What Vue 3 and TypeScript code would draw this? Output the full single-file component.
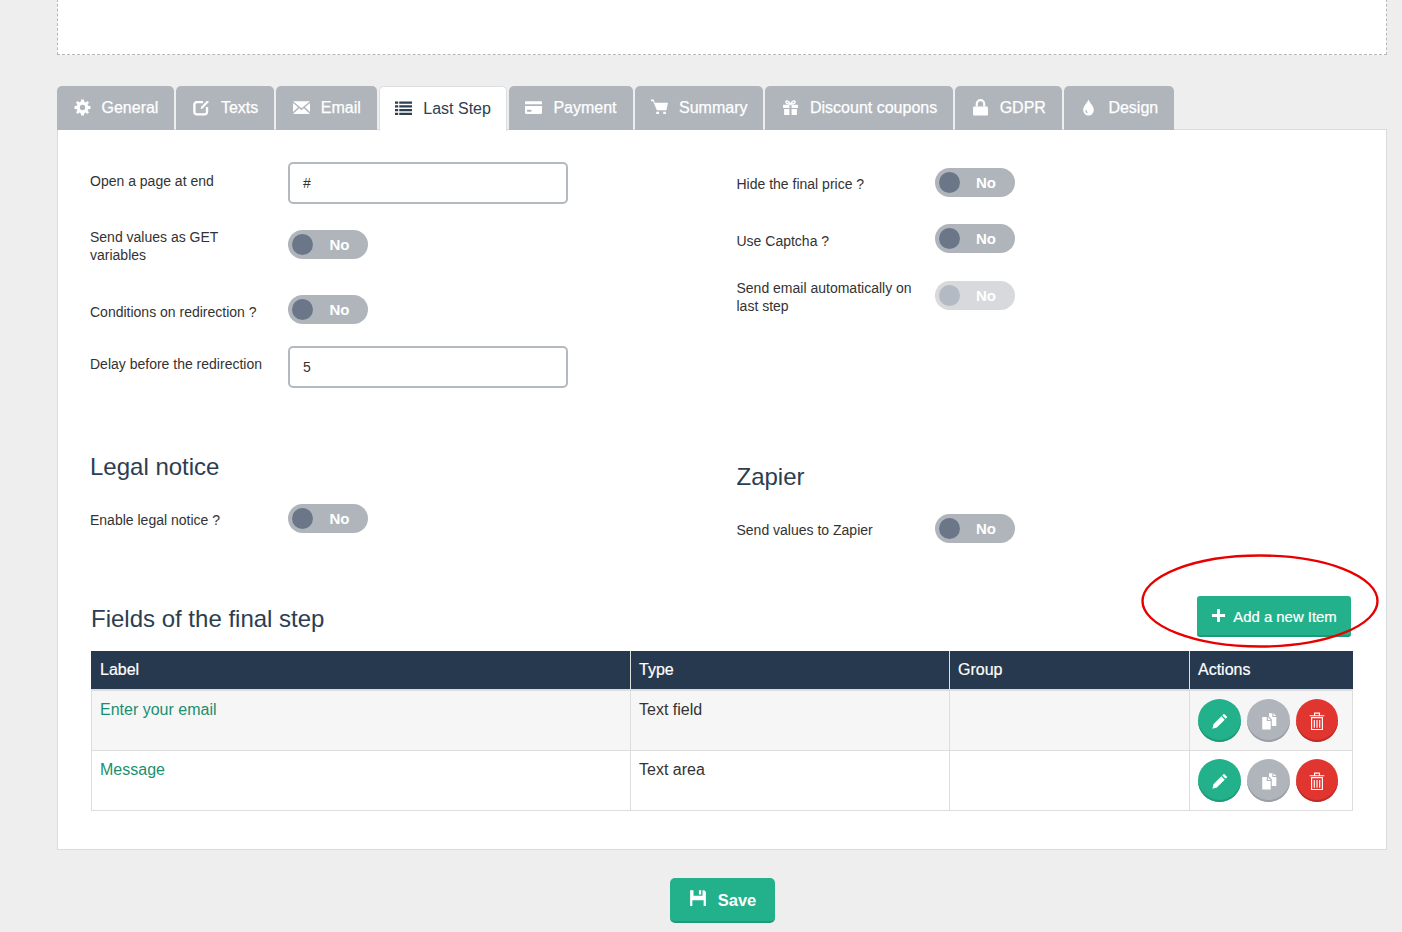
<script setup lang="ts">
interface Icon { fill?: string; stroke?: string; sw?: number }

const icons: Record<string, Icon> = {
  gear: { fill: 'M6.7.5H9.3L9.7 2.7 11 3.2 12.4 1.8 14.2 3.6 12.8 5 13.3 6.3 15.5 6.7V9.3L13.3 9.7 12.8 11 14.2 12.4 12.4 14.2 11 12.8 9.7 13.3 9.3 15.500H6.7L6.3 13.3 5 12.8 3.6 14.2 1.8 12.4 3.2 11 2.7 9.7.5 9.3V6.7L2.7 6.3 3.2 5 1.8 3.6 3.6 1.8 5 3.2 6.3 2.700ZM8 5.500a2.500 2.500 0 1 0 0 5 2.500 2.500 0 0 0 0-5Z' },
  edit: { fill: 'M7.200 9.300 7.600 7.500 12.800 1.800 14.500 1.800 14.500 3.200 9 9Z', stroke: 'M9.500 3H3.500a2.200 2.200 0 0 0-2.200 2.200V12.300a2.200 2.200 0 0 0 2.200 2.200h7.500a2.200 2.200 0 0 0 2.200-2.200V7.500', sw: 2.200 },
  mail: { fill: 'M0 2h16L8 8.800ZM0 3.800l4.800 4L0 12.300ZM16 3.800l-4.800 4 4.800 4.500ZM0 14l5.800-5.300L8 10.500l2.200-1.800L16 14Z' },
  list: { fill: 'M0 1.500h3v2H0ZM4 1.500h12v2H4ZM0 5h3v2H0ZM4 5h12v2H4ZM0 8.500h3v2H0ZM4 8.500h12v2H4ZM0 12h3v2H0ZM4 12h12v2H4Z' },
  card: { fill: 'M1 2h14a1 1 0 0 1 1 1v2H0V3a1 1 0 0 1 1-1ZM0 6.500h16V13a1 1 0 0 1-1 1H1a1 1 0 0 1-1-1ZM2 10v2h4v-2Z' },
  cart: { fill: 'M0 .5h2.500l1 3H16l-1.500 7H5.500L2 2H0ZM5 12h2.500v2H5ZM11.500 12H14v2h-2.500Z' },
  gift: { fill: 'M1 5.500h6v3H1ZM9 5.500h6v3H9ZM2 9.500h5V15H2ZM9 9.500h5V15H9Z', stroke: 'M8 4.800C6 1 3 1 3.800 3.300 4.300 4.800 8 4.800 8 4.800s3.700 0 4.200-1.500C13 1 10 1 8 4.800Z', sw: 1.300 },
  lock: { fill: 'M2 7h12a1 1 0 0 1 1 1v6.500a1 1 0 0 1-1 1H2a1 1 0 0 1-1-1V8a1 1 0 0 1 1-1Z', stroke: 'M4.500 7V4.500a3.500 3.500 0 0 1 7 0V7', sw: 2 },
  drop: { fill: 'M8 .5c1 3 5 6 5 10a5 5 0 0 1-10 0c0-4 4-7 5-10ZM5 10.500c0 1.800 1.200 3.100 3 3.200-1.100-.8-1.600-1.800-1.600-3.200Z' },
  plus: { fill: 'M6.500 1h3v5.500H15v3H9.500V15h-3V9.500H1v-3h5.500Z' },
  pencil: { fill: 'M11.500 1.500l3 3L13 6l-3-3ZM9.200 3.800l3 3-7 7-4 1 1-4Z' },
  copy: { fill: 'M2 4.500h4v3.500h3.500V15.500H2ZM7 4.500l2.500 2.500H7ZM8 1h3v3.500h3.500V12.500h-4V6.500L8 4ZM12 1l2.500 2.500H12Z' },
  trash: { stroke: 'M1.500 3.300h13M5.800 3V1h4.400V3M3.200 5h9.600V15.500H3.200ZM5.600 7V14M8 7V14M10.400 7V14', sw: 1 },
  save: { fill: 'M1 1h3v5h8V1h1.500L15 2.500V15h-2v-5H3v5H1ZM8.800 1h2v3.800h-2Z' },
}

const tabs = [
  { label: 'General', icon: 'gear' },
  { label: 'Texts', icon: 'edit' },
  { label: 'Email', icon: 'mail' },
  { label: 'Last Step', icon: 'list', active: true },
  { label: 'Payment', icon: 'card' },
  { label: 'Summary', icon: 'cart' },
  { label: 'Discount coupons', icon: 'gift' },
  { label: 'GDPR', icon: 'lock' },
  { label: 'Design', icon: 'drop' },
]

const rows = [
  { label: 'Enter your email', type: 'Text field' },
  { label: 'Message', type: 'Text area' },
]

const actions = [
  { icon: 'pencil', cls: 'green' },
  { icon: 'copy', cls: 'grey' },
  { icon: 'trash', cls: 'red' },
]
</script>

<template>
  <div class="page">
    <div class="dropzone"></div>

    <nav class="tabs">
      <a v-for="t in tabs" :key="t.label" class="tab" :class="{ active: t.active }">
        <svg class="ico" viewBox="0 0 16 16">
          <path v-if="icons[t.icon].fill" :d="icons[t.icon].fill" fill="currentColor" fill-rule="evenodd" />
          <path v-if="icons[t.icon].stroke" :d="icons[t.icon].stroke" fill="none" stroke="currentColor" :stroke-width="icons[t.icon].sw" />
        </svg>
        <span>{{ t.label }}</span>
      </a>
    </nav>

    <section class="panel">
      <div class="cols">
        <div class="col">
          <div class="row h66">
            <label class="lbl mt10">Open a page at end</label>
            <input class="field" value="#" />
          </div>
          <div class="row h67">
            <label class="lbl">Send values as GET variables</label>
            <div class="toggle mt2"><i></i><b>No</b></div>
          </div>
          <div class="row h51">
            <label class="lbl mt8">Conditions on redirection ?</label>
            <div class="toggle"><i></i><b>No</b></div>
          </div>
          <div class="row">
            <label class="lbl mt9">Delay before the redirection</label>
            <input class="field" value="5" />
          </div>
          <h2 class="legal">Legal notice</h2>
          <div class="row">
            <label class="lbl mt7">Enable legal notice ?</label>
            <div class="toggle"><i></i><b>No</b></div>
          </div>
        </div>

        <div class="col right">
          <div class="row h56">
            <label class="lbl mt7">Hide the final price ?</label>
            <div class="toggle"><i></i><b>No</b></div>
          </div>
          <div class="row h57">
            <label class="lbl mt8">Use Captcha ?</label>
            <div class="toggle"><i></i><b>No</b></div>
          </div>
          <div class="row">
            <label class="lbl mtn2">Send email automatically on last step</label>
            <div class="toggle off"><i></i><b>No</b></div>
          </div>
          <h2 class="zapier">Zapier</h2>
          <div class="row">
            <label class="lbl mt7">Send values to Zapier</label>
            <div class="toggle"><i></i><b>No</b></div>
          </div>
        </div>
      </div>

      <div class="fields">
        <div class="fields-head">
          <h2>Fields of the final step</h2>
          <button class="add">
            <svg viewBox="0 0 16 16" class="plus"><path :d="icons.plus.fill" fill="currentColor" /></svg>
            <span>Add a new Item</span>
          </button>
          <svg class="circle" viewBox="0 0 240 96">
            <ellipse cx="120" cy="47" rx="117.500" ry="45.500" fill="none" stroke="#e80000" stroke-width="2.400" />
          </svg>
        </div>

        <table>
          <colgroup>
            <col class="c1" /><col class="c2" /><col class="c3" /><col class="c4" />
          </colgroup>
          <thead>
            <tr><th>Label</th><th>Type</th><th>Group</th><th>Actions</th></tr>
          </thead>
          <tbody>
            <tr v-for="r in rows" :key="r.label">
              <td><a class="link">{{ r.label }}</a></td>
              <td>{{ r.type }}</td>
              <td></td>
              <td>
                <div class="acts">
                  <span v-for="a in actions" :key="a.icon" class="round" :class="a.cls">
                    <svg viewBox="0 0 16 16">
                      <path v-if="icons[a.icon].fill" :d="icons[a.icon].fill" fill="currentColor" fill-rule="evenodd" />
                      <path v-if="icons[a.icon].stroke" :d="icons[a.icon].stroke" fill="none" stroke="currentColor" :stroke-width="icons[a.icon].sw" />
                    </svg>
                  </span>
                </div>
              </td>
            </tr>
          </tbody>
        </table>
      </div>
    </section>

    <div class="save-wrap">
      <button class="save">
        <svg viewBox="0 0 16 16"><path :d="icons.save.fill" fill="currentColor" fill-rule="evenodd" /></svg>
        <span>Save</span>
      </button>
    </div>
  </div>
</template>

<style scoped>
.page {
  padding: 0 15px 9px 57px;
  font-family: "Liberation Sans", Arial, sans-serif;
  color: #2f3b47;
}
.dropzone {
  height: 54px;
  margin-top: -1px;
  border: 1px dashed #b4b8bb;
  background: #fff;
}
.tabs {
  display: flex;
  gap: 2px;
  margin-top: 31px;
  height: 44px;
  position: relative;
  z-index: 1;
}
.tab {
  display: flex;
  align-items: center;
  height: 44px;
  padding: 0 16px 0 16.500px;
  background: #b0b5bb;
  color: #fff;
  font-size: 16px;
  border-radius: 5px 5px 0 0;
  box-sizing: border-box;
  -webkit-text-stroke: .25px #fff;
}
.tab.active {
  height: 45px;
  background: #fff;
  color: #2c3e50;
  border: 1px solid #dcdfe1;
  border-bottom: 0;
  padding: 0 15px 0 15.500px;
  -webkit-text-stroke: 0;
}
.ico {
  width: 17px;
  height: 17px;
  margin-right: 11px;
  margin-top: -1px;
  flex: none;
}
.panel {
  box-sizing: border-box;
  height: 721px;
  margin-top: -1px;
  background: #fff;
  border: 1px solid #d9dcde;
  padding: 32px 33px 0 32px;
}
.cols {
  display: grid;
  grid-template-columns: 646.500px 1fr;
  height: 400px;
}
.right {
  padding-top: 6px;
}
.row {
  display: flex;
  align-items: flex-start;
}
.h66 { height: 66px; }
.h67 { height: 67px; }
.h51 { height: 51px; }
.h56 { height: 56px; }
.h57 { height: 57px; }
.lbl {
  display: block;
  box-sizing: border-box;
  width: 198px;
  padding-right: 18px;
  flex: none;
  font-size: 14px;
  line-height: 18px;
  color: #333;
}
.mt10 { margin-top: 10px; }
.mt9 { margin-top: 9px; }
.mt8 { margin-top: 8px; }
.mt7 { margin-top: 7px; }
.mt2 { margin-top: 2px; }
.mtn2 { margin-top: -2px; }
.field {
  box-sizing: border-box;
  width: 280px;
  height: 42px;
  padding: 0 13px;
  border: 2px solid #b4b9bf;
  border-radius: 5px;
  background: #fff;
  outline: 0;
  font: 14px "Liberation Sans", Arial, sans-serif;
  color: #333;
}
.toggle {
  position: relative;
  display: block;
  width: 80px;
  height: 29px;
  flex: none;
  border-radius: 15px;
  background: #b0b5bb;
}
.toggle i {
  position: absolute;
  left: 4px;
  top: 4px;
  width: 21px;
  height: 21px;
  border-radius: 50%;
  background: #6b7789;
}
.toggle b {
  position: absolute;
  left: 41.500px;
  top: 0;
  line-height: 29px;
  font-size: 15px;
  color: #fff;
}
.toggle.off { opacity: .5; }
h2 {
  margin: 0;
  font-weight: 400;
  color: #2c3e50;
  font-size: 24px;
  line-height: 30px;
}
.legal {
  margin: 64px 0 22px;
}
.zapier {
  margin: 147px 0 22px;
}
.fields {
  padding-left: 1px;
}
.fields-head {
  position: relative;
  display: flex;
  justify-content: space-between;
  align-items: flex-start;
  height: 89px;
  padding-right: 2px;
  box-sizing: border-box;
}
.fields-head h2 {
  margin-top: 42px;
  line-height: 30px;
}
.add {
  margin-top: 34px;
  width: 154px;
  height: 41px;
  display: flex;
  align-items: center;
  justify-content: center;
  gap: 7px;
  border: 0;
  border-bottom: 2px solid #1d9a79;
  border-radius: 3px;
  background: #22b18a;
  color: #fff;
  font: 14.900px "Liberation Sans", Arial, sans-serif;
  -webkit-text-stroke: .2px #fff;
  padding: 0;
  position: relative;
}
.add span { margin-top: 2px; }
.plus { width: 15px; height: 15px; }
.circle {
  position: absolute;
  right: -27px;
  top: -8px;
  width: 240px;
  height: 96px;
  pointer-events: none;
  z-index: 2;
}
table {
  width: 1261px;
  border-collapse: collapse;
  table-layout: fixed;
  font-size: 16px;
  color: #333;
}
.c1 { width: 539px; }
.c2 { width: 319px; }
.c3 { width: 240px; }
.c4 { width: 163px; }
th {
  height: 39px;
  box-sizing: border-box;
  padding: 0 8px;
  text-align: left;
  font-weight: 400;
  background: #27394e;
  color: #fff;
  -webkit-text-stroke: .2px #fff;
  border-left: 1px solid #dddddd;
  border-bottom: 2px solid #dddddd;
}
th:first-child { border-left: 1px solid #27394e; }
th:last-child { border-right: 1px solid #27394e; }
td {
  height: 60px;
  box-sizing: border-box;
  padding: 8px;
  vertical-align: top;
  line-height: 22.860px;
  border: 1px solid #dddddd;
}
tbody tr:nth-child(odd) td { background: #f6f6f6; }
.link { color: #1a8f70; }
.acts {
  display: flex;
  gap: 6px;
}
.round {
  box-sizing: border-box;
  width: 43px;
  height: 43px;
  flex: none;
  border-radius: 50%;
  display: flex;
  align-items: center;
  justify-content: center;
  color: #fff;
}
.round svg { width: 18px; height: 18px; }
.round.green { background: #22b18a; box-shadow: inset 0 -2px 0 #1d9a79; }
.round.grey { background: #b0b5bb; box-shadow: inset 0 -2px 0 #9a9fa5; }
.round.red { width: 42px; background: #e13530; box-shadow: inset 0 -2px 0 #bf2c28; }
.save-wrap {
  display: flex;
  margin-top: 28px;
  padding-left: 613px;
}
.save {
  box-sizing: border-box;
  width: 105px;
  height: 45px;
  display: flex;
  align-items: center;
  justify-content: center;
  gap: 11px;
  border: 0;
  border-bottom: 2px solid #1d9a79;
  border-radius: 5px;
  background: #22b18a;
  color: #fff;
  font: 700 16.500px "Liberation Sans", Arial, sans-serif;
  padding: 0;
}
.save span { margin-top: 2px; }
.save svg { width: 18px; height: 18px; margin-top: -4px; }
</style>

<style>
html, body { margin: 0; background: #eeeeee; overflow: hidden; }
</style>
